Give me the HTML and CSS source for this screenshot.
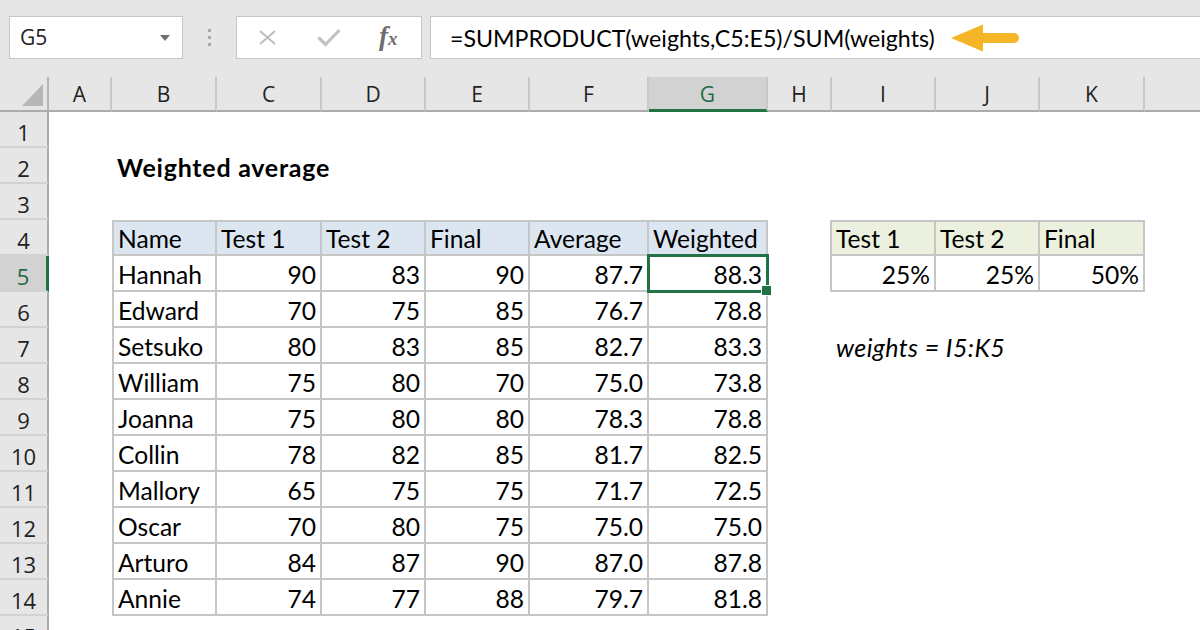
FILE: index.html
```html
<!DOCTYPE html>
<html>
<head>
<meta charset="utf-8">
<title>Weighted average</title>
<link rel="stylesheet" href="styles.css">
</head>
<body>
<div class="app">
  <header class="fbar">
    <div class="namebox">
      <span class="ref">G5</span>
      <svg class="dd" width="10" height="6" viewBox="0 0 10 6"><path d="M0 0H10L5 6Z"/></svg>
    </div>
    <div class="grip"><i></i><i></i><i></i></div>
    <div class="btns">
      <svg class="ico-x" width="19" height="15" viewBox="0 0 19 15"><path d="M2 1L17 14M17 1L2 14"/></svg>
      <svg class="ico-ok" width="24" height="19" viewBox="0 0 24 19"><path d="M1.5 9.5L8.5 16.5L22.5 2"/></svg>
      <span class="fx">f<span class="fx-x">x</span></span>
    </div>
    <div class="formula">
      <span class="ftext">=SUMPRODUCT(weights,C5:E5)/SUM(weights)</span>
      <svg class="arrow" width="68" height="30" viewBox="0 0 68 30"><path d="M0 15L32 1.5V28.5Z"/><rect x="28" y="10" width="40" height="10" rx="5"/></svg>
    </div>
  </header>

  <main class="sheet">
    <div class="corner"><svg width="21" height="22" viewBox="0 0 21 22"><path d="M21 0V22H0Z"/></svg></div>
    <div class="ch">A</div>
    <div class="ch">B</div>
    <div class="ch">C</div>
    <div class="ch">D</div>
    <div class="ch">E</div>
    <div class="ch">F</div>
    <div class="ch sel">G</div>
    <div class="ch">H</div>
    <div class="ch">I</div>
    <div class="ch">J</div>
    <div class="ch">K</div>
    <div class="ch last"></div>

    <div class="rowhdrs">
      <div class="rh">1</div>
      <div class="rh">2</div>
      <div class="rh">3</div>
      <div class="rh">4</div>
      <div class="rh sel">5</div>
      <div class="rh">6</div>
      <div class="rh">7</div>
      <div class="rh">8</div>
      <div class="rh">9</div>
      <div class="rh">10</div>
      <div class="rh">11</div>
      <div class="rh">12</div>
      <div class="rh">13</div>
      <div class="rh">14</div>
      <div class="rh">15</div>
    </div>

    <div class="title">Weighted average</div>

    <div class="tbl main">
      <div class="c hd">Name</div><div class="c hd">Test 1</div><div class="c hd">Test 2</div><div class="c hd">Final</div><div class="c hd">Average</div><div class="c hd">Weighted</div>
      <div class="c">Hannah</div><div class="c n">90</div><div class="c n">83</div><div class="c n">90</div><div class="c n">87.7</div><div class="c n">88.3</div>
      <div class="c">Edward</div><div class="c n">70</div><div class="c n">75</div><div class="c n">85</div><div class="c n">76.7</div><div class="c n">78.8</div>
      <div class="c">Setsuko</div><div class="c n">80</div><div class="c n">83</div><div class="c n">85</div><div class="c n">82.7</div><div class="c n">83.3</div>
      <div class="c">William</div><div class="c n">75</div><div class="c n">80</div><div class="c n">70</div><div class="c n">75.0</div><div class="c n">73.8</div>
      <div class="c">Joanna</div><div class="c n">75</div><div class="c n">80</div><div class="c n">80</div><div class="c n">78.3</div><div class="c n">78.8</div>
      <div class="c">Collin</div><div class="c n">78</div><div class="c n">82</div><div class="c n">85</div><div class="c n">81.7</div><div class="c n">82.5</div>
      <div class="c">Mallory</div><div class="c n">65</div><div class="c n">75</div><div class="c n">75</div><div class="c n">71.7</div><div class="c n">72.5</div>
      <div class="c">Oscar</div><div class="c n">70</div><div class="c n">80</div><div class="c n">75</div><div class="c n">75.0</div><div class="c n">75.0</div>
      <div class="c">Arturo</div><div class="c n">84</div><div class="c n">87</div><div class="c n">90</div><div class="c n">87.0</div><div class="c n">87.8</div>
      <div class="c">Annie</div><div class="c n">74</div><div class="c n">77</div><div class="c n">88</div><div class="c n">79.7</div><div class="c n">81.8</div>
    </div>

    <div class="tbl wts">
      <div class="c hd">Test 1</div><div class="c hd">Test 2</div><div class="c hd">Final</div>
      <div class="c n">25%</div><div class="c n">25%</div><div class="c n">50%</div>
    </div>

    <div class="note">weights = I5:K5</div>

    <div class="sel-box"></div>
  </main>
</div>
</body>
</html>
```

FILE: styles.css
```css
* { box-sizing: border-box; }

html, body {
  margin: 0;
  padding: 0;
  background: #ffffff;
}

body {
  width: 1200px;
  height: 630px;
  overflow: hidden;
  font-family: "Lato", "Liberation Sans", sans-serif;
  color: #000;
}

.app {
  width: 1200px;
  height: 630px;
  display: flex;
  flex-direction: column;
  overflow: hidden;
}

/* ---------- formula bar ---------- */
.fbar {
  height: 77px;
  flex: none;
  background: #e6e6e6;
  display: flex;
  align-items: flex-start;
  padding: 16px 0 0 9px;
}

.namebox {
  width: 174px;
  height: 43px;
  background: #fff;
  border: 1px solid #c6c6c6;
  display: flex;
  align-items: center;
  padding: 0 12px 0 10px;
}

.ref {
  font-family: "Open Sans", "Noto Sans", sans-serif;
  font-size: 21px;
  line-height: 21px;
  color: #222;
}

.dd {
  margin-left: auto;
  fill: #6f6f6f;
}

.grip {
  width: 53px;
  height: 43px;
  display: flex;
  flex-direction: column;
  align-items: center;
  justify-content: center;
  gap: 4px;
}

.grip i {
  display: block;
  width: 3px;
  height: 3px;
  background: #a8a8a8;
}

.btns {
  width: 186px;
  height: 43px;
  background: #fff;
  border: 1px solid #c6c6c6;
  display: flex;
  align-items: center;
  padding-left: 21px;
}

.ico-x {
  fill: none;
  stroke: #bdbdbd;
  stroke-width: 2;
}

.ico-ok {
  margin-left: 40px;
  fill: none;
  stroke: #c2c2c2;
  stroke-width: 3.2;
}

.fx {
  margin-left: 38px;
  font-family: "Liberation Serif", "DejaVu Serif", serif;
  font-style: italic;
  font-weight: bold;
  font-size: 27px;
  line-height: 27px;
  color: #6e6e6e;
}

.fx-x {
  font-size: 19px;
}

.formula {
  margin-left: 8px;
  margin-right: -10px;
  flex: 1;
  height: 43px;
  background: #fff;
  border: 1px solid #c6c6c6;
  display: flex;
  align-items: center;
  padding-left: 19px;
}

.ftext {
  font-size: 23.2px;
  line-height: 28px;
  white-space: nowrap;
}

.arrow {
  margin-left: 16px;
  fill: #f4b527;
}

/* ---------- sheet ---------- */
.sheet {
  flex: none;
  display: grid;
  grid-template-columns: 49px 63px 105px 105px 104px 104px 119px 119px 64px 104px 104px 105px 1fr;
  grid-template-rows: 35px repeat(15, 36px);
}

.corner {
  grid-row: 1;
  background: #e6e6e6;
  border-right: 2px solid #b4b4b4;
  border-bottom: 2px solid #ababab;
  display: flex;
  justify-content: flex-end;
  align-items: flex-end;
  padding: 0 4px 4px 0;
}

.corner svg { fill: #b6b6b6; }

.ch {
  grid-row: 1;
  background: #e6e6e6;
  border-right: 2px solid #c8c8c8;
  border-bottom: 2px solid #ababab;
  display: flex;
  justify-content: center;
  align-items: flex-end;
  padding-bottom: 5px;
  font-family: "Open Sans", "Noto Sans", sans-serif;
  font-size: 21px;
  line-height: 21px;
  color: #222;
}

.ch.sel {
  background: #d2d2d2;
  border-bottom: 3px solid #217346;
  padding-bottom: 4px;
  color: #1f6b44;
}

.ch.last { border-right: none; }

.rowhdrs {
  grid-column: 1;
  grid-row: 2 / span 15;
  display: flex;
  flex-direction: column;
}

.rh {
  height: 36px;
  flex: none;
  background: #e6e6e6;
  border-right: 2px solid #ababab;
  border-bottom: 2px solid #d2d2d2;
  display: flex;
  justify-content: center;
  align-items: flex-end;
  padding-bottom: 3px;
  font-family: "Open Sans", "Noto Sans", sans-serif;
  font-size: 22px;
  line-height: 22px;
  color: #222;
}

.rh.sel {
  background: #d2d2d2;
  border-right: 3px solid #217346;
  color: #1f6b44;
}

.title {
  grid-column: 3 / span 4;
  grid-row: 3;
  display: flex;
  align-items: flex-end;
  padding: 0 0 3px 5px;
  font-weight: bold;
  font-size: 25px;
  line-height: 28px;
  letter-spacing: 0.75px;
  white-space: nowrap;
}

.tbl {
  display: grid;
  grid-auto-rows: 36px;
}

.main {
  grid-column: 3 / 9;
  grid-row: 5 / span 11;
  grid-template-columns: 105px 105px 104px 104px 119px 119px;
}

.wts {
  grid-column: 10 / 13;
  grid-row: 5 / span 2;
  margin-left: -2px;
  grid-template-columns: 106px 104px 105px;
}

.c {
  border-right: 2px solid #c6c6c6;
  border-bottom: 2px solid #c6c6c6;
  display: flex;
  align-items: flex-end;
  padding: 0 4px 1px 4px;
  font-size: 24.6px;
  line-height: 28px;
  white-space: nowrap;
}

.c.n { justify-content: flex-end; }

.c.hd { border-top: 2px solid #c6c6c6; }

.main .c.hd { background: #dce6f1; }
.wts .c.hd { background: #ebf1de; }

.main .c:nth-child(6n+1),
.wts .c:nth-child(3n+1) { border-left: 2px solid #c6c6c6; }

.note {
  grid-column: 10 / span 3;
  grid-row: 8;
  display: flex;
  align-items: flex-end;
  padding: 0 0 3px 4px;
  font-style: italic;
  font-size: 25px;
  line-height: 28px;
  letter-spacing: 0.4px;
  white-space: nowrap;
}

.sel-box {
  grid-column: 8;
  grid-row: 6;
  margin: -2px -1px -1px -2px;
  border: 3px solid #217346;
  position: relative;
  z-index: 2;
}

.sel-box::after {
  content: "";
  position: absolute;
  right: -6px;
  bottom: -6px;
  width: 9px;
  height: 9px;
  background: #217346;
  border: 1px solid #fff;
}
```
